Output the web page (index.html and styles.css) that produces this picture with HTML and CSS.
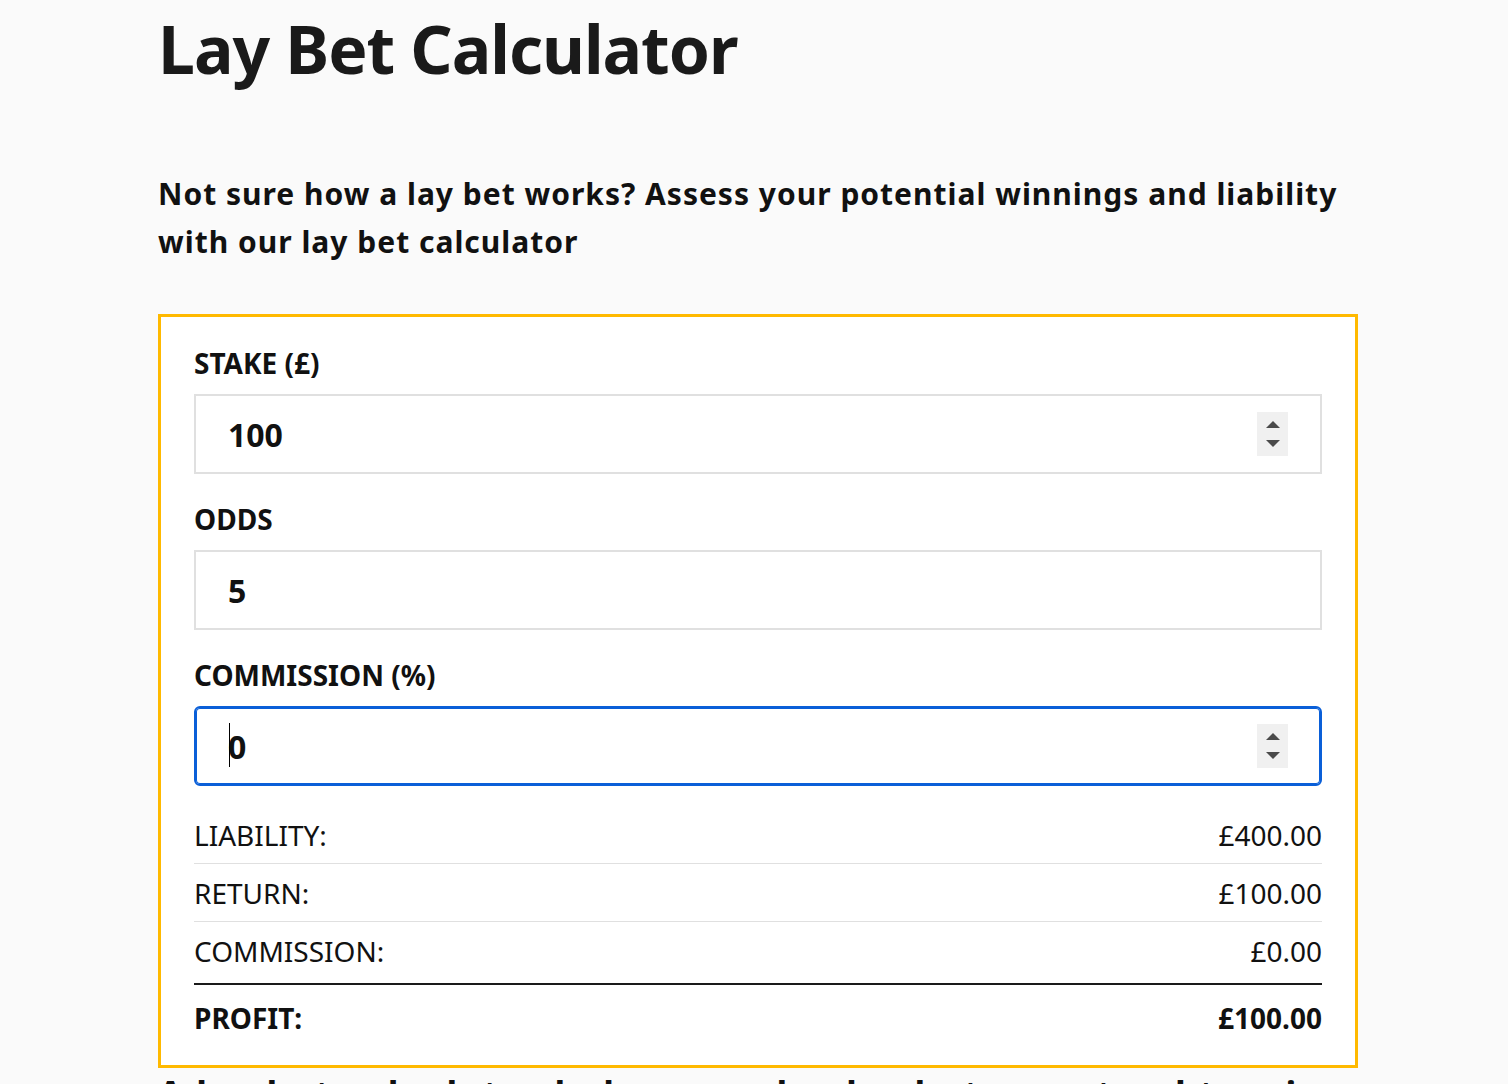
FILE: index.html
```html
<!DOCTYPE html>
<html lang="en">
<head>
    <meta charset="UTF-8">
    <meta name="viewport" content="width=device-width, initial-scale=1.0">
    <title>Lay Bet Calculator</title>
    <link rel="stylesheet" href="styles.css">
</head>
<body>
    <main class="page">
        <h1 class="title">Lay Bet Calculator</h1>
        <p class="intro">Not sure how a lay bet works? Assess your potential winnings and liability with our lay bet calculator</p>

        <form class="calc" onsubmit="return false">
            <label class="calc-label" for="stake">STAKE (£)</label>
            <div class="field">
                <input class="field-input" id="stake" type="number" value="100">
                <span class="spin"><i class="spin-up"></i><i class="spin-down"></i></span>
            </div>

            <label class="calc-label" for="odds">ODDS</label>
            <div class="field">
                <input class="field-input" id="odds" type="number" value="5">
            </div>

            <label class="calc-label" for="commission">COMMISSION (%)</label>
            <div class="field field-focused">
                <input class="field-input" id="commission" type="number" value="0">
                <span class="caret"></span>
                <span class="spin"><i class="spin-up"></i><i class="spin-down"></i></span>
            </div>

            <div class="results">
                <div class="row"><span>LIABILITY:</span><span id="liability">£400.00</span></div>
                <div class="row"><span>RETURN:</span><span id="return">£100.00</span></div>
                <div class="row row-last"><span>COMMISSION:</span><span id="comm">£0.00</span></div>
                <div class="row row-total"><span>PROFIT:</span><span id="profit">£100.00</span></div>
            </div>
        </form>

        <h2 class="outro">A lay bet calculator helps you check what you stand to win or lose</h2>
    </main>
</body>
</html>
```

FILE: styles.css
```css
body {
    margin: 0;
    background-color: #fafafa;
    color: #1a1a1a;
    font-family: "Noto Sans", "Open Sans", sans-serif;
}
.page {
    width: 1200px;
    margin-left: 158px;
}
.title {
    margin: 9px 0 0;
    font-size: 66px;
    line-height: 1.2;
    font-weight: 700;
    letter-spacing: -1px;
}
.intro {
    margin: 82px 0 48px;
    font-size: 30px;
    line-height: 48px;
    font-weight: 700;
    letter-spacing: 1px;
    color: #111;
}
.calc {
    background: #fff;
    border: 3px solid #ffb900;
    padding: 27px 33px 33px;
    display: flex;
    flex-direction: column;
}
.calc-label {
    font-size: 28px;
    line-height: 38px;
    font-weight: 700;
    color: #111;
    margin-bottom: 12px;
}
.field {
    position: relative;
    height: 80px;
    box-sizing: border-box;
    border: 2px solid #e0e0e0;
    background: #fff;
    margin-bottom: 26px;
    display: flex;
    align-items: center;
}
.field-input {
    flex: 1;
    border: none;
    outline: none;
    background: transparent;
    padding: 0 32px;
    height: 100%;
    font-family: inherit;
    font-size: 32px;
    font-weight: 700;
    color: #111;
    -moz-appearance: textfield;
}
.field-input::-webkit-inner-spin-button,
.field-input::-webkit-outer-spin-button {
    -webkit-appearance: none;
    margin: 0;
}
.field-focused {
    border-color: #0a5fd8;
    box-shadow: inset 0 0 0 1px #0a5fd8;
    border-radius: 6px;
}
.caret {
    position: absolute;
    left: 33px;
    top: 15px;
    width: 1px;
    height: 44px;
    background: #000;
}
.spin {
    position: absolute;
    right: 32px;
    top: 50%;
    transform: translateY(-50%);
    width: 31px;
    height: 44px;
    background: #f0f0f0;
    display: flex;
    flex-direction: column;
    align-items: center;
    justify-content: center;
    gap: 12px;
}
.spin-up,
.spin-down {
    width: 0;
    height: 0;
    border-left: 7px solid transparent;
    border-right: 7px solid transparent;
}
.spin-up {
    border-bottom: 7px solid #4a4a4a;
}
.spin-down {
    border-top: 7px solid #4a4a4a;
}
.results {
    margin-top: -6px;
}
.row {
    display: flex;
    justify-content: space-between;
    font-size: 28px;
    line-height: 28px;
    padding: 15px 0 14px;
    border-bottom: 1px solid #e0e0e0;
    color: #111;
}
.row-last {
    border-bottom: none;
    padding-bottom: 18px;
}
.row-total {
    border-top: 2px solid #1a1a1a;
    border-bottom: none;
    padding: 19px 0 0;
    font-weight: 700;
}
.outro {
    margin: 4px 0 0;
    font-size: 36px;
    line-height: 1.2;
    font-weight: 700;
    letter-spacing: 2px;
    color: #111;
}
```
